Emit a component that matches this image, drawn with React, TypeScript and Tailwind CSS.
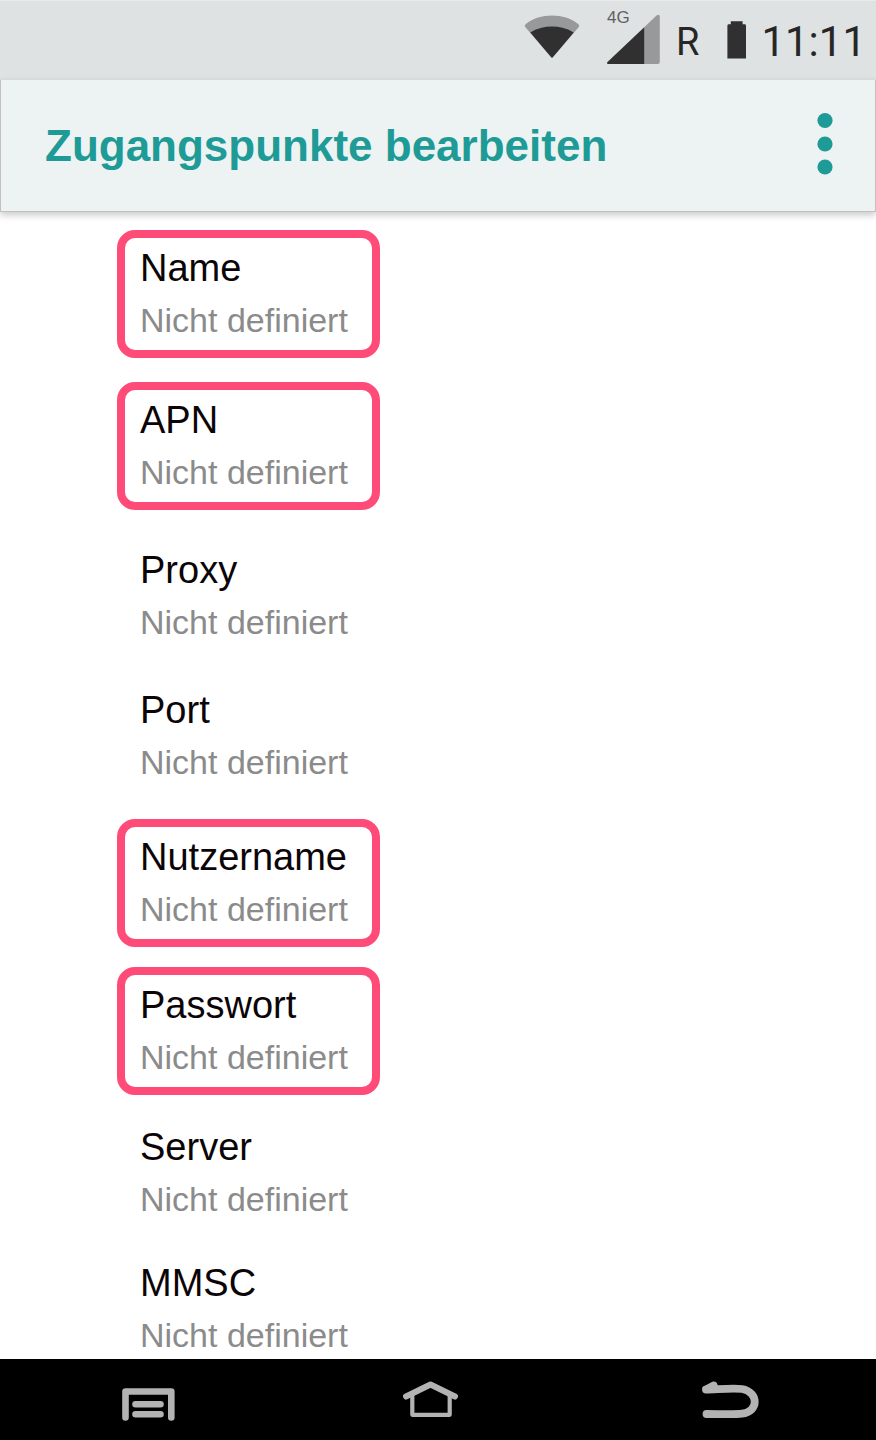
import React from 'react';

type AccessPointField = {
    label: string;
    value: string;
    highlighted: boolean;
    spacing: string;
};

const fields: AccessPointField[] = [
    { label: 'Name', value: 'Nicht definiert', highlighted: true, spacing: 'mt-0' },
    { label: 'APN', value: 'Nicht definiert', highlighted: true, spacing: 'mt-6' },
    { label: 'Proxy', value: 'Nicht definiert', highlighted: false, spacing: 'mt-5.5' },
    { label: 'Port', value: 'Nicht definiert', highlighted: false, spacing: 'mt-3' },
    { label: 'Nutzername', value: 'Nicht definiert', highlighted: true, spacing: 'mt-[19px]' },
    { label: 'Passwort', value: 'Nicht definiert', highlighted: true, spacing: 'mt-5' },
    { label: 'Server', value: 'Nicht definiert', highlighted: false, spacing: 'mt-3.5' },
    { label: 'MMSC', value: 'Nicht definiert', highlighted: false, spacing: 'mt-2' },
];

function WifiIcon() {
    return (
        <svg width="56" height="80" viewBox="525 0 56 80" aria-hidden="true">
            <path d="M526.2 27 Q525 25.3 526.8 24 C541 12.8 565 12.8 579.2 24 Q581 25.3 579.8 27 L554 57 Q553 58.6 552 57 Z" fill="#97999a" />
            <path d="M531.3 32.5 C544 24.6 562 24.6 574.7 32.5 L554 57 Q553 58.6 552 57 Z" fill="#303030" />
        </svg>
    );
}

function SignalIcon() {
    return (
        <div className="relative">
            <svg width="54" height="80" viewBox="607 0 54 80" aria-hidden="true">
                <path d="M645 27.5 L657.5 15.5 Q660.8 13.2 660.8 17 V62 Q660.8 64 658.8 64 H645 Z" fill="#97999a" />
                <path d="M645.2 27.3 V64 H609.5 Q607 63.8 608.5 62 Z" fill="#303030" />
            </svg>
            <span className="absolute top-2 left-px text-[17px] leading-5 text-[#5f6161]">4G</span>
        </div>
    );
}

function BatteryIcon() {
    return (
        <svg width="20" height="80" viewBox="727 0 20 80" aria-hidden="true">
            <path d="M730.8 21.2 H742.6 V24.3 H744.6 Q746 24.3 746 25.7 V58.6 H727.4 V25.7 Q727.4 24.3 728.8 24.3 H730.8 Z" fill="#303030" />
        </svg>
    );
}

function StatusBar() {
    return (
        <div className="flex h-20 shrink-0 items-center justify-end bg-[#dee2e2] pr-2.5 text-[#262626] shadow-[inset_0_1px_0_#e8ebeb]">
            <WifiIcon />
            <div className="ml-6.5">
                <SignalIcon />
            </div>
            <span className="ml-4 pt-1 font-[Roboto,sans-serif] text-[38px] leading-10">R</span>
            <div className="ml-7">
                <BatteryIcon />
            </div>
            <span className="ml-3.5 pt-1 font-[Roboto,sans-serif] text-[42px] leading-10">11:11</span>
        </div>
    );
}

function Header() {
    return (
        <header className="relative flex h-[132px] shrink-0 items-center justify-between border-x border-b border-[#c5bfc3] bg-[#edf3f3] pr-[38px] pl-11 shadow-[0_3px_7px_rgba(0,0,0,0.22)]">
            <h1 className="text-[44px] leading-[52px] font-bold text-[#1e9b97]">Zugangspunkte bearbeiten</h1>
            <button type="button" aria-label="Weitere Optionen" className="px-1 pb-1">
                <svg width="16" height="64" viewBox="0 0 16 64" fill="#1e9b97" aria-hidden="true">
                    <circle cx="8" cy="8.5" r="7.6" />
                    <circle cx="8" cy="32" r="7.6" />
                    <circle cx="8" cy="55" r="7.6" />
                </svg>
            </button>
        </header>
    );
}

function FieldRow({ field }: { field: AccessPointField }) {
    return (
        <li className={field.spacing}>
            <button
                type="button"
                className={`block h-32 w-[263px] rounded-[18px] border-8 pb-1 pl-[15px] text-left whitespace-nowrap ${
                    field.highlighted ? 'border-[#ff4b77]' : 'border-transparent'
                }`}
            >
                <span className="block text-[38px] leading-[56px] text-[#0b0508]">{field.label}</span>
                <span className="block text-[34px] leading-[48px] text-[#8b8b8b]">{field.value}</span>
            </button>
        </li>
    );
}

function NavigationBar() {
    return (
        <nav className="flex h-[81px] shrink-0 items-center bg-black pr-[116px] pl-[121px] text-[#b3b3b3]">
            <button type="button" aria-label="Menü">
                <svg width="55" height="81" viewBox="121 1359 55 81" fill="none" stroke="currentColor" strokeLinecap="round" strokeLinejoin="round" aria-hidden="true">
                    <path d="M125.5 1417.5 V1391.5 H171.3 V1417.5" strokeWidth="6.6" />
                    <path d="M135.5 1404.3 H160.5 M135.5 1414.3 H160.5" strokeWidth="6.6" />
                </svg>
            </button>
            <button type="button" aria-label="Startseite" className="ml-[35%]">
                <svg width="60" height="81" viewBox="400 1359 60 81" fill="none" stroke="currentColor" strokeLinecap="round" strokeLinejoin="round" aria-hidden="true">
                    <path d="M406 1396.5 L430.5 1384.5 L455 1396.5" strokeWidth="6" />
                    <path d="M412.3 1394 V1414.8 H449.7 V1394" strokeWidth="4.2" />
                </svg>
            </button>
            <button type="button" aria-label="Zurück" className="ml-auto">
                <svg width="60" height="81" viewBox="700 1359 60 81" fill="none" stroke="currentColor" strokeLinecap="round" strokeLinejoin="round" aria-hidden="true">
                    <path d="M706 1389.7 C719 1389.3 733 1387.8 742 1389 C759 1392 759 1412 742 1413.7 C734 1414.7 718 1414 706.5 1414" strokeWidth="7.8" />
                    <path d="M705 1388.5 L713.5 1384 Q716 1383.8 714.8 1389" strokeWidth="5" fill="currentColor" />
                </svg>
            </button>
        </nav>
    );
}

export default function App() {
    return (
        <div className="flex h-screen flex-col bg-white font-['Liberation_Sans',Arial,sans-serif]">
            <StatusBar />
            <Header />
            <main className="min-h-0 flex-1 overflow-y-auto pt-[18px] pl-[117px] [scrollbar-width:none]">
                <ul>
                    {fields.map((field) => (
                        <FieldRow key={field.label} field={field} />
                    ))}
                </ul>
            </main>
            <NavigationBar />
        </div>
    );
}
